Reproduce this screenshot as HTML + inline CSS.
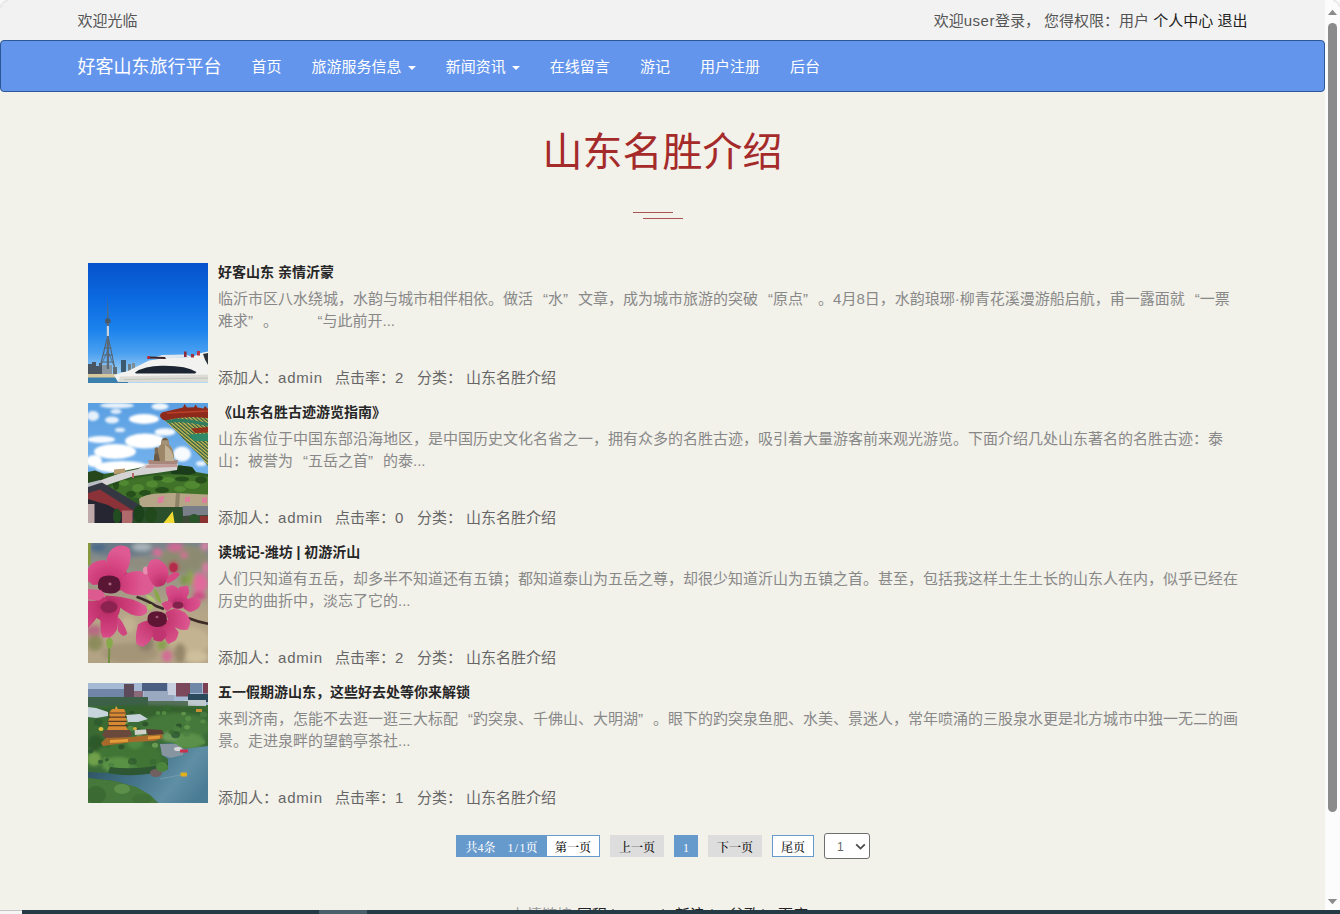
<!DOCTYPE html>
<html lang="zh-CN">
<head>
<meta charset="utf-8">
<title>山东名胜介绍 - 好客山东旅行平台</title>
<style>
*{box-sizing:border-box;}
html,body{margin:0;padding:0;}
html{overflow:hidden;}
body{width:1340px;height:914px;position:relative;overflow:hidden;background:#f2f1ea;
  font-family:"Liberation Sans","Noto Sans CJK SC",sans-serif;font-size:15px;color:#555;}
a{text-decoration:none;color:inherit;}
#view{position:absolute;left:0;top:0;width:1325px;height:910px;overflow:hidden;background:#f2f1ea;}
.container{width:1200px;margin:0 auto;padding:0 15px;position:relative;}
/* top bar */
#topbar{height:40px;overflow:hidden;background:#f2f2f2;line-height:42px;font-size:15px;color:#555;}
#topbar .l{float:left;}
#topbar .r{float:right;}
#topbar .r a{color:#222;}
/* navbar */
#nav{height:52px;background:#6495ed;border:1px solid #2c5996;border-radius:4px;}
#nav .brand{float:left;margin-left:-15px;padding:16px 15px 14px;font-size:18px;line-height:20px;color:#fff;height:50px;}
#nav ul{list-style:none;margin:0;padding:0;float:left;}
#nav li{float:left;}
#nav li a{display:block;padding:16px 15px 14px;line-height:20px;font-size:15px;color:#fff;height:50px;white-space:nowrap;}
.caret{display:inline-block;width:0;height:0;margin-left:2px;vertical-align:middle;border-top:4px solid #fff;border-right:4px solid transparent;border-left:4px solid transparent;}
/* title */
#title{position:absolute;left:0;top:122px;width:1325px;text-align:center;font-size:40px;line-height:60px;color:#a52a2a;font-weight:400;margin:0;}
.deco{position:absolute;height:1px;background:#ab5555;width:40px;}
/* list */
.item{position:absolute;left:88px;width:1150px;height:120px;}
.item .pic{position:absolute;left:0;top:0;width:120px;height:120px;overflow:hidden;display:block;}
.item .pic svg{display:block;}
.item h4{position:absolute;left:130px;top:1px;margin:0;font-size:14px;line-height:17px;font-weight:bold;color:#262626;white-space:nowrap;}
.item .desc{position:absolute;left:130px;top:25px;margin:0;font-size:15px;line-height:22px;color:#888;white-space:nowrap;}
.item .meta{position:absolute;left:130px;top:104px;margin:0;font-size:15px;line-height:22px;color:#666;white-space:nowrap;}
.q{display:inline-block;width:15px;}
.ql{text-align:right;}
.qr{text-align:left;}
.en{display:inline-block;}
/* pager */
#pager{position:absolute;left:0;top:835px;height:22px;width:1325px;font-family:"Liberation Serif","Noto Serif CJK SC",serif;font-size:12px;line-height:26px;color:#111;font-weight:500;}
#pager span,#pager a{position:absolute;top:0;height:22px;text-align:center;white-space:nowrap;overflow:hidden;}
.pb{background:#6699cc;color:#fff;}
#pager i{display:inline-block;width:6px;text-align:center;font-style:normal;}
.pw{background:#fff;border:1px solid #6699cc;line-height:24px;}
.pg{background:#ddd;}
#sel{position:absolute;left:824px;top:833px;width:46px;height:26px;background:#fff;border:1px solid #6e6e6e;border-radius:3px;font-size:12px;line-height:26px;color:#666;}
/* footer */
#foot{position:absolute;left:0;top:904px;width:1325px;height:22px;font-size:15px;line-height:22px;color:#999;white-space:nowrap;}
#foot a,#foot span{position:absolute;top:0;}
#foot a{color:#222;}
/* fake scrollbar */
#sb{position:absolute;left:1325px;top:0;width:15px;height:910px;background:#fcfcfc;}
#sb .thumb{position:absolute;left:3px;top:23px;width:9px;height:789px;border-radius:5px;background:#8b8b8b;}
#sb .up{position:absolute;left:3px;top:10px;width:0;height:0;border-left:4.5px solid transparent;border-right:4.5px solid transparent;border-bottom:5px solid #8b8b8b;}
#sb .dn{position:absolute;left:3px;top:899px;width:0;height:0;border-left:4.5px solid transparent;border-right:4.5px solid transparent;border-top:5px solid #8b8b8b;}
#strip{position:absolute;left:0;top:910px;width:1340px;height:4px;background:#f5f5f5;border-top:1px solid #c4c4c4;}
#strip i{position:absolute;left:22px;top:-1px;width:1318px;height:4px;background:#243a45;}
#strip b{position:absolute;left:319px;top:-1px;width:48px;height:4px;background:#4a5f6a;}
</style>
</head>
<body>
<div id="view">
  <div id="topbar"><div class="container"><div class="l">欢迎光临</div><div class="r">欢迎<span style="letter-spacing:0.5px">user</span>登录， 您得权限：用户 <a>个人中心</a> <a>退出</a></div></div></div>
  <div id="nav"><div class="container">
    <a class="brand">好客山东旅行平台</a>
    <ul>
      <li><a>首页</a></li>
      <li><a>旅游服务信息 <b class="caret"></b></a></li>
      <li><a>新闻资讯 <b class="caret"></b></a></li>
      <li><a>在线留言</a></li>
      <li><a>游记</a></li>
      <li><a>用户注册</a></li>
      <li><a>后台</a></li>
    </ul>
  </div></div>

  <h2 id="title">山东名胜介绍</h2>
  <div class="deco" style="left:633px;top:212px;"></div>
  <div class="deco" style="left:643px;top:218px;"></div>

  <div class="item" style="top:263px;">
    <a class="pic"><!--IMG1--><svg width="120" height="120" viewBox="0 0 120 120">
<defs>
<linearGradient id="a1" x1="0" y1="0" x2="0" y2="1"><stop offset="0" stop-color="#0652cc"/><stop offset=".3" stop-color="#0c6ae0"/><stop offset=".55" stop-color="#1a82ec"/><stop offset=".75" stop-color="#4aa0f0"/><stop offset=".88" stop-color="#8cc4f2"/><stop offset=".95" stop-color="#b4d8f4"/></linearGradient>
<filter id="b1"><feGaussianBlur stdDeviation=".5"/></filter>
</defs>
<rect width="120" height="120" fill="url(#a1)"/>
<g filter="url(#b1)">
<rect x="0" y="111" width="30" height="4" fill="#d8c79c"/>
<rect x="0" y="114.5" width="40" height="5.5" fill="#3a80ac"/>
<path d="M0 101h4v-2h4v4h3v-3h3v11H0z" fill="#4a5560"/>
<rect x="14" y="102" width="10" height="9" fill="#8a96a0"/>
<rect x="33" y="97" width="5" height="12" fill="#3b5a70"/>
<rect x="25" y="104" width="4" height="7" fill="#5d6d78"/>
<rect x="40" y="101" width="3" height="8" fill="#6d7d88"/>
<rect x="44" y="100" width="3" height="8" fill="#7d8d98"/>
<path d="M19.8 33 L20.6 55 L19 55 Z" fill="#5a6a7a"/>
<circle cx="19.8" cy="58" r="2.8" fill="#4a5866"/>
<rect x="18.8" y="60" width="2.2" height="46" fill="#5c6a78"/><rect x="18.8" y="63" width="2.2" height="10" fill="#c8d4e0"/>
<path d="M19 76 L12 104 M20.6 76 L26.5 104 M14.5 92 L25 92 M13 99 L26 99 M16 85 L23.5 85" stroke="#566472" stroke-width="1.1" fill="none"/>
<path d="M12 104 L19.8 88 L26.5 104" stroke="#566472" stroke-width=".8" fill="none"/>
</g>
<g filter="url(#b1)">
<path d="M26 112 L40 108 L61 97.5 L78 95 L104 94 L113 90 L120 88.5 L120 119 L30 119 Z" fill="#f2f2f0"/>
<path d="M62 96 L74 92 L98 91.5 L104 94 L78 95.5 Z" fill="#dfe6ee"/>
<path d="M59 95.5 L61 93.5 L77 94 L78 96 Z" fill="#3a2226"/>
<circle cx="60.5" cy="94.5" r="1.4" fill="#d02030"/>
<path d="M47 109.5 Q57 102.5 75 102.8 Q98 102.5 108.5 109 L107 110.5 L48 110.5 Z" fill="#1c2530"/>
<path d="M32 113.5 L120 111.5 L120 119 L30 119 Z" fill="#dcdcd6"/>
<path d="M36 116.5 L120 115" stroke="#b8b8b0" stroke-width=".7"/>
<rect x="96" y="88.5" width="2.6" height="5.5" fill="#8a2a3a"/>
<rect x="103" y="91" width="3" height="3.5" fill="#a03040"/>
<rect x="109" y="88" width="3" height="4.5" fill="#c03545"/>
<path d="M115 91 Q117 98 120 102 L120 90 Z" fill="#2a3038"/>
</g>
</svg><!--/IMG1--></a>
    <h4>好客山东 亲情沂蒙</h4>
    <p class="desc">临沂市区八水绕城，水韵与城市相伴相依。做活<span class="q ql">“</span>水<span class="q qr">”</span>文章，成为城市旅游的突破<span class="q ql">“</span>原点<span class="q qr">”</span>。4月8日，水韵琅琊·柳青花溪漫游船启航，甫一露面就<span class="q ql">“</span>一票<br>难求<span class="q qr">”</span>。　　<span class="en" style="width:7px"></span><span class="q ql">“</span>与此前开...</p>
    <p class="meta">添加人：<span class="en" style="width:45px;letter-spacing:0.8px">admin</span><span class="en" style="width:12px"></span>点击率：<span class="en" style="width:9px">2</span><span class="en" style="width:13px"></span>分类：<span class="en" style="width:4px"></span>山东名胜介绍</p>
  </div>

  <div class="item" style="top:403px;">
    <a class="pic"><!--IMG2--><svg width="120" height="120" viewBox="0 0 120 120">
<defs>
<linearGradient id="a2" x1="0" y1="0" x2="0" y2="1"><stop offset="0" stop-color="#5a9fe2"/><stop offset=".55" stop-color="#74b2ec"/></linearGradient>
<filter id="b2"><feGaussianBlur stdDeviation="1.3"/></filter>
<filter id="c2"><feGaussianBlur stdDeviation=".55"/></filter>
<pattern id="p2" width="2.6" height="2.6" patternUnits="userSpaceOnUse" patternTransform="rotate(40)"><rect width="2.6" height="2.6" fill="#2e5a40"/><rect width="2.6" height="1.3" fill="#cdbf58"/></pattern>
</defs>
<rect width="120" height="120" fill="url(#a2)"/>
<g filter="url(#b2)" fill="#fff">
<ellipse cx="29" cy="2.5" rx="17" ry="2.8" opacity=".85"/>
<ellipse cx="5" cy="13" rx="6" ry="5" opacity=".85"/>
<ellipse cx="24" cy="17" rx="7" ry="3.5" opacity=".85"/>
<ellipse cx="28" cy="8.5" rx="5.5" ry="2.5" opacity=".8"/>
<ellipse cx="56" cy="16" rx="15" ry="5"/>
<ellipse cx="72" cy="3.5" rx="8.5" ry="3.5" opacity=".9"/>
<ellipse cx="32" cy="27" rx="5" ry="2.2" opacity=".8"/>
<ellipse cx="77" cy="29" rx="10.5" ry="3.8" opacity=".95"/>
<ellipse cx="57" cy="38" rx="20" ry="7.5"/>
<ellipse cx="13" cy="36.5" rx="14" ry="3.6" opacity=".95"/>
<ellipse cx="27" cy="48.5" rx="21" ry="7.5"/>
<ellipse cx="6" cy="58" rx="8" ry="6"/>
<ellipse cx="94" cy="51" rx="9" ry="7.5" opacity=".95"/>
<ellipse cx="34" cy="64" rx="27" ry="6"/>
<ellipse cx="113" cy="60.5" rx="5" ry="2.6" opacity=".85"/>
</g>
<g filter="url(#c2)">
<!-- hill / trees -->
<path d="M0 70 L6 68 L15 71 L30 69 L50 65 L60 62 L81 63 L92 62.5 L104 64 L108 69 L120 71 L120 120 L0 120 Z" fill="#2f5c24"/>
<path d="M81 63.5 L92 62.5 L104 64 L108 70 L96 73 L84 72 Z" fill="#1c3c1c"/>
<path d="M0 69 L7 67.5 L16 71 L14 79 L0 80 Z" fill="#27471f"/>
<path d="M22 84 Q40 75 60 73 Q80 70 100 72 L120 74 L120 92 L50 95 L30 92 Z" fill="#3f7229"/>
<g fill="#548c30" filter="url(#c2)" opacity=".85"><ellipse cx="50" cy="85" rx="6" ry="4"/><ellipse cx="64" cy="81" rx="6" ry="3.5"/><ellipse cx="80" cy="77" rx="7" ry="3"/><ellipse cx="104" cy="82" rx="8" ry="4"/><ellipse cx="36" cy="80" rx="5" ry="3"/><ellipse cx="92" cy="86" rx="6" ry="3"/></g>
<g fill="#20481c" filter="url(#c2)" opacity=".85"><ellipse cx="57" cy="90" rx="6" ry="3"/><ellipse cx="74" cy="87" rx="7" ry="3"/><ellipse cx="94" cy="76" rx="7" ry="2.6"/><ellipse cx="113" cy="77" rx="6" ry="3.5"/><ellipse cx="43" cy="91" rx="5" ry="3"/><ellipse cx="28" cy="82" rx="3" ry="5"/><ellipse cx="70" cy="75" rx="5" ry="2.5"/></g>
<!-- terraces and stairs -->
<path d="M50 66 L59 60.5 L90 60.5 L89 67 L72 69.5 L46 73 L22 81 L0 89 L0 82 L20 74.5 L36 69 Z" fill="#d6d3d4"/>
<path d="M0 80 L12 77 L13 81 L0 86 Z" fill="#b8bcc4"/>
<path d="M59 62 L89 61.5 L89 64 L57 65 Z" fill="#c49a98"/>
<path d="M60 57 L90 57 L89 61.5 L61 61.5 Z" fill="#a8867c"/>
<path d="M26 66.5 L37 65.5 L37 69.5 L26 71.5 Z" fill="#b89a70"/>
<rect x="44" y="70" width="2" height="5" fill="#b86a6a"/>
<!-- buddha -->
<path d="M66 58 Q65.5 49 70 45.5 Q71.5 42 73 41.5 Q72.5 36 77 34.5 Q81.5 35.5 81 41.5 Q86 45 86.3 58 Z" fill="#9c8868"/>
<path d="M77 42 Q84 45 86.3 58 L77 58 Z" fill="#c2b296"/>
<path d="M66 58 Q65.5 50 69.5 46.5 L72 58 Z" fill="#6a5a44"/>
<path d="M66.5 46 Q68 43 70 45 L69.5 51 L67 51 Z" fill="#7a6a52"/>
<circle cx="77" cy="38.5" r="3.4" fill="#a3937a"/>
<path d="M73.6 37.2 Q77 32.6 80.4 37.2 Z" fill="#6b5b48"/>
<!-- eave -->
<path d="M75 16 L120 12 L120 63 L112 53 L100 41 L88 28 Z" fill="url(#p2)"/>
<path d="M72 12.5 Q72.5 9 78 8.5 L95 4.5 L96.5 1 L99 4.6 L106 4.2 L107.5 1.5 L109.5 4.6 L115.5 5.5 L117 3 L120 6 L120 15 L104 14 L90 15 L77 17.5 Q72.5 16 72 12.5 Z" fill="#8e2b1b"/>
<path d="M79 10 L120 8" stroke="#b8402a" stroke-width="1.6"/>
<path d="M77 17.5 L90 15.5 L104 17 L120 20 L120 23 L103 20 L90 19 L80 20 Z" fill="#2d7d62"/>
<path d="M103 25.5 L120 24 L120 29.5 L107 30 Z" fill="#94301e"/>
<path d="M100 31.5 L120 30.5 L120 38 L106 38 Z" fill="#2f8a68"/>
<!-- rock -->
<path d="M51 96 Q58 89.5 86 90 L120 91.5 L120 104 L52 104 Z" fill="#b4a686"/>
<path d="M88 90 L92 90 L91 104 L87 104 Z" fill="#8c8266"/>
<path d="M70 94.5 l6 -2 l-1 7 l-5.5 1 Z M97 94.5 l5 -1 l0 5 l-5 1 Z M114 95 l5 -1 l0 6 l-5 0 Z" fill="#dd7f9c"/>
<!-- roofs bottom-left -->
<path d="M0 84 L14 79.5 L30 89 L50 101 L73 117 L73 120 L0 120 Z" fill="#343842"/>
<path d="M0 90 L12 86.5 L30 98 L46 108 L40 112 L0 100 Z" fill="#8a3239"/>
<path d="M0 96 L20 102 L34 110 L34 120 L0 120 Z" fill="#282830"/>
<rect x="0" y="101" width="6.5" height="19" fill="#bda9a9"/>
<rect x="34" y="107.5" width="10.5" height="12.5" fill="#b06a6c"/>
<path d="M52 104 L95 104 L95 120 L44 120 Z" fill="#29502a"/>
<path d="M94.500 103 L120 103 L120 112 L95 113 Z" fill="#797e88"/>
<path d="M95 113 L120 112 L120 120 L95 120 Z" fill="#3a4a35"/>
<rect x="112" y="113" width="8" height="7" fill="#8a3232"/>
<path d="M75.500 120 L84.700 108.300 L86.600 120 Z" fill="#f0da32"/>
<ellipse cx="29" cy="113" rx="4" ry="7.500" fill="#244d24"/>
<ellipse cx="51" cy="111" rx="5.500" ry="9" fill="#1f431d"/>
<ellipse cx="63" cy="112" rx="6" ry="8" fill="#23491f"/>
<ellipse cx="106" cy="116" rx="5" ry="5" fill="#2a552a"/>
</g>
</svg><!--/IMG2--></a>
    <h4>《山东名胜古迹游览指南》</h4>
    <p class="desc">山东省位于中国东部沿海地区，是中国历史文化名省之一，拥有众多的名胜古迹，吸引着大量游客前来观光游览。下面介绍几处山东著名的名胜古迹：泰<br>山：被誉为<span class="q ql">“</span>五岳之首<span class="q qr">”</span>的泰...</p>
    <p class="meta">添加人：<span class="en" style="width:45px;letter-spacing:0.8px">admin</span><span class="en" style="width:12px"></span>点击率：<span class="en" style="width:9px">0</span><span class="en" style="width:13px"></span>分类：<span class="en" style="width:4px"></span>山东名胜介绍</p>
  </div>

  <div class="item" style="top:543px;">
    <a class="pic"><!--IMG3--><svg width="120" height="120" viewBox="0 0 120 120">
<defs>
<linearGradient id="a3" x1="0" y1="0" x2="0" y2="1"><stop offset="0" stop-color="#77848c"/><stop offset=".18" stop-color="#8d8f86"/><stop offset=".42" stop-color="#a59c86"/><stop offset=".6" stop-color="#b6a688"/><stop offset="1" stop-color="#b3a385"/></linearGradient>
<filter id="b3"><feGaussianBlur stdDeviation="2"/></filter>
<filter id="c3"><feGaussianBlur stdDeviation=".7"/></filter>
<radialGradient id="f1" gradientUnits="userSpaceOnUse" cx="21" cy="42" r="34"><stop offset="0" stop-color="#a82460"/><stop offset=".3" stop-color="#c93874"/><stop offset=".7" stop-color="#d94a86"/><stop offset="1" stop-color="#dd5a92"/></radialGradient>
<radialGradient id="f2" gradientUnits="userSpaceOnUse" cx="20" cy="63" r="36"><stop offset="0" stop-color="#9c2058"/><stop offset=".3" stop-color="#c2336e"/><stop offset=".75" stop-color="#d24480"/><stop offset="1" stop-color="#dc5a92"/></radialGradient>
<radialGradient id="f3" gradientUnits="userSpaceOnUse" cx="74" cy="42" r="28"><stop offset="0" stop-color="#b82c66"/><stop offset=".5" stop-color="#d74884"/><stop offset="1" stop-color="#de5c94"/></radialGradient>
<radialGradient id="f4" gradientUnits="userSpaceOnUse" cx="90" cy="62" r="24"><stop offset="0" stop-color="#a82460"/><stop offset=".4" stop-color="#d04080"/><stop offset="1" stop-color="#dc5890"/></radialGradient>
<radialGradient id="f5" gradientUnits="userSpaceOnUse" cx="69" cy="76" r="32"><stop offset="0" stop-color="#9c2058"/><stop offset=".35" stop-color="#c63872"/><stop offset="1" stop-color="#dc5690"/></radialGradient>
</defs>
<rect width="120" height="120" fill="url(#a3)"/>
<g filter="url(#b3)">
<ellipse cx="34" cy="6" rx="32" ry="8" fill="#697a88"/>
<ellipse cx="10" cy="4" rx="8" ry="4" fill="#4a6a88"/>
<ellipse cx="54" cy="4" rx="10" ry="4" fill="#aab4ba"/>
<ellipse cx="96" cy="16" rx="24" ry="14" fill="#8c8b72"/>
<ellipse cx="50" cy="20" rx="10" ry="6" fill="#8f8d80"/>
<ellipse cx="69.500" cy="9.500" rx="4.500" ry="4" fill="#dc6a9a"/>
<ellipse cx="87" cy="4" rx="8" ry="4.500" fill="#cf6894"/>
<ellipse cx="117" cy="3" rx="4" ry="4" fill="#e080a8"/>
<ellipse cx="96" cy="12" rx="3.500" ry="3" fill="#d86a98"/>
<ellipse cx="85.500" cy="24" rx="5" ry="5.500" fill="#b82a50"/>
<ellipse cx="112" cy="40" rx="8" ry="10" fill="#e06a9c"/>
<ellipse cx="111" cy="53" rx="7" ry="4" fill="#cf4a84"/>
<ellipse cx="118" cy="25" rx="3" ry="6" fill="#e078a4"/>
<ellipse cx="102.500" cy="35" rx="3" ry="8" fill="#88a648"/>
<ellipse cx="96" cy="37" rx="3" ry="5" fill="#7a9440"/>
<ellipse cx="6" cy="88" rx="8" ry="6" fill="#b86a84"/>
<ellipse cx="7" cy="100" rx="8" ry="8" fill="#8c8c5c"/>
<ellipse cx="79" cy="113" rx="5" ry="6" fill="#d46a96"/>
<ellipse cx="74" cy="102" rx="5" ry="5.500" fill="#86a04c"/>
<ellipse cx="102" cy="98" rx="20" ry="14" fill="#c4b390"/>
<ellipse cx="108" cy="114" rx="12" ry="6" fill="#cfc09c"/>
<ellipse cx="42" cy="110" rx="28" ry="10" fill="#a49478"/>
<ellipse cx="58" cy="100" rx="8" ry="8" fill="#8d806a"/>
<ellipse cx="92" cy="110" rx="6" ry="10" fill="#95866a"/>
<ellipse cx="40" cy="82" rx="8" ry="8" fill="#c2b292"/>
</g>
<g filter="url(#c3)">
<rect x="0" y="0" width="2.600" height="22" fill="#86983a"/>
<path d="M48.600 53.800 Q60 58 68 63 L76 66 M100 75 Q110 79 120 80.700" stroke="#3a2b28" stroke-width="2.600" fill="none"/>
<path d="M21.500 96 L21 120" stroke="#6f8e40" stroke-width="2"/>
<ellipse cx="21.500" cy="100" rx="3.300" ry="5.500" fill="#86aa4a"/>
<path d="M65.600 46 Q71 47 73.500 60.400 Q67 58 65.600 46 Z" fill="#8aa848"/>
<path d="M57.800 52 Q64 51 68 59 Q61 59.500 57.800 52 Z" fill="#b4c474"/>
<ellipse cx="62" cy="64" rx="3" ry="3" fill="#a8bc64"/>
<!-- flower 1 -->
<ellipse cx="28" cy="37" rx="15" ry="11" fill="#c93874"/>
<path d="M18.400 17 Q20 9 25 5.300 Q29 2 34 2.600 Q40 3 42 6.600 Q43.500 12 42 18.400 Q41 24 38 29 L33 35.400 L23.600 32.800 Q19 27 18.400 23.600 Z" fill="url(#f1)"/>
<path d="M0 26 Q2 21.500 5 19.700 Q11 16.500 17 17 Q22 24 23.600 32.800 Q20 37 15.800 39.400 Q10 42 5 42 L0 38 Z" fill="url(#f1)"/>
<path d="M32.800 36.800 Q35 32.500 39.400 30.200 Q46 27.500 52.500 28.200 Q59 30 63 34 Q66.500 38.500 66.300 43.300 Q65 48 61.700 50 Q56 52.500 50 52.500 Q43 52 38 50.500 Q33.500 48 31.500 44.600 Z" fill="url(#f1)"/>
<path d="M10 40 Q11 34 17 33 Q24 31.500 30 35 Q33.500 39 32 46 Q29 51 22 50.500 Q13 50 10 45 Z" fill="#5a1434"/>
<ellipse cx="22" cy="41" rx="1.600" ry="1.400" fill="#a86a7c"/>
<!-- flower 2 -->
<ellipse cx="18" cy="66" rx="14" ry="12" fill="#c2336e"/>
<path d="M0 46 L13 47 Q16 49.500 17 52.500 Q14 56 10.500 57.800 L0 56.500 Z" fill="#dc5a90"/>
<path d="M17 52.500 Q25 52.500 33 54 Q39 55 44.600 56.500 Q52 59 57.800 63 Q60 66.500 59 69.600 Q56.500 72.500 52.500 73 Q48 73 43.300 71.500 Q37 68.500 31.500 64.300 Q25 61.500 19.700 59 Z" fill="url(#f2)"/>
<path d="M0 57.800 L10.500 57.800 Q13 61 13 65.600 Q11.500 71 7.900 76 Q4 81 0 85 Z" fill="url(#f2)"/>
<path d="M13 68 Q19 65 26 65.600 Q29.500 69 30 73.500 Q30.500 80 29 86.600 Q26.500 91.500 22.300 94.500 L14.400 94.500 Q12.500 89 12.500 84 Q12 76 13 68 Z" fill="url(#f2)"/>
<path d="M29 73.500 Q32 75.500 34 78.800 Q37.500 84.500 39.400 90.600 Q38 92.500 35.400 93 Q32 91 30 88 Z" fill="#cf4580"/>
<ellipse cx="21" cy="64" rx="8.500" ry="6" fill="#8c2250"/>
<!-- flower 3 -->
<ellipse cx="57.700" cy="27.500" rx="2.800" ry="4" fill="#e88cb0"/>
<ellipse cx="85.500" cy="24.500" rx="4" ry="4.500" fill="#b42a4c"/>
<path d="M59 26 Q60 20 63 17 Q67 15.500 71 16.400 Q76 19 78.800 23.600 Q81 28 80.700 32.800 Q79.500 38 76 42 Q72 44 68 44 Q64 41 61.700 36.800 Q59.500 32 59 26 Z" fill="url(#f3)"/>
<path d="M78.800 35.400 Q82 31 86.600 29 Q90 29 92 31 Q90 34.500 86.600 36.800 Q83 39.500 78.800 40.700 Z" fill="#d84a84"/>
<!-- flower 4 -->
<ellipse cx="90" cy="58" rx="10" ry="8" fill="#cc3c7a"/>
<path d="M77.500 44.600 Q80.500 42.500 84 42 Q88 43 90.600 46 Q91.500 50 90.600 55 Q89 58.500 86.600 60.400 Q82.500 58.500 80 55 Q77.500 50 77.500 44.600 Z" fill="url(#f4)"/>
<path d="M90.600 44.600 Q95 42.500 99.800 42.700 Q101.500 46 101 50 Q99 55 95.800 59 L90.600 57.800 Z" fill="url(#f4)"/>
<path d="M97 57.800 Q102 54.500 107.600 53.800 Q111.500 55.500 113 59 Q112.500 63 110 65.600 Q106.500 68 102.400 69 Q98.500 68 95.800 65.600 Z" fill="url(#f4)"/>
<path d="M73.500 60.400 Q77 58 81.400 57.800 Q84 60 85.300 63 Q82.500 66 78.800 68.300 Q75 65 73.500 60.400 Z" fill="#d44882"/>
<ellipse cx="90" cy="62" rx="5.500" ry="3.600" fill="#80204a"/>
<!-- flower 5 -->
<ellipse cx="71" cy="85" rx="16" ry="10" fill="#c63872"/>
<path d="M77.500 69.600 Q81.500 66.500 86.600 65.600 Q92 66.500 97 69.600 Q100.500 73 102.400 77.500 Q102 82.500 99.800 86.600 Q96 87.500 92 86.600 Q86 84 81.400 80 Z" fill="url(#f5)"/>
<path d="M50 81.400 Q54 78.500 59 77.500 Q63 81 65.600 85.300 Q65.500 91.500 63 97 Q59.500 101.500 55 103.700 Q51 103 48.600 101 Q47.500 96.500 48 92 Q48.500 86.500 50 81.400 Z" fill="url(#f5)"/>
<path d="M73.500 81.400 L84 81.400 Q88 85 90.600 89.300 Q90 93.500 88 97 Q84.500 99.500 80 101 Q77 96.500 76 92 Z" fill="url(#f5)"/>
<path d="M64.300 85.300 Q69 84 73.500 84 Q77 87.500 78.800 92 Q77 96 73.500 98.500 Q69 98.500 65.600 97 Z" fill="#c03470"/>
<path d="M59.500 75 Q60 69.500 66 68.500 Q73 67.500 77.500 71 Q80 75 78 80.500 Q74 84.500 68 84 Q61 83 59.500 78 Z" fill="#5e1636"/>
<ellipse cx="69" cy="74" rx="1.500" ry="1.200" fill="#a05a74"/>
</g>
</svg><!--/IMG3--></a>
    <h4>读城记-潍坊 | 初游沂山</h4>
    <p class="desc">人们只知道有五岳，却多半不知道还有五镇；都知道泰山为五岳之尊，却很少知道沂山为五镇之首。甚至，包括我这样土生土长的山东人在内，似乎已经在<br>历史的曲折中，淡忘了它的...</p>
    <p class="meta">添加人：<span class="en" style="width:45px;letter-spacing:0.8px">admin</span><span class="en" style="width:12px"></span>点击率：<span class="en" style="width:9px">2</span><span class="en" style="width:13px"></span>分类：<span class="en" style="width:4px"></span>山东名胜介绍</p>
  </div>

  <div class="item" style="top:683px;">
    <a class="pic"><!--IMG4--><svg width="120" height="120" viewBox="0 0 120 120">
<defs>
<filter id="b4"><feGaussianBlur stdDeviation="1.5"/></filter>
<filter id="c4"><feGaussianBlur stdDeviation=".6"/></filter>
<linearGradient id="l4" x1="0" y1=".3" x2="1" y2=".7"><stop offset="0" stop-color="#2b5160"/><stop offset=".45" stop-color="#447489"/><stop offset=".75" stop-color="#5f8fa5"/><stop offset="1" stop-color="#4b7c96"/></linearGradient>
</defs>
<rect width="120" height="120" fill="#3b6c38"/>
<g filter="url(#c4)">
<rect x="0" y="0" width="120" height="22" fill="#a6b9d4"/>
<rect x="0" y="6" width="36" height="10" fill="#6f86a8"/>
<rect x="36" y="1" width="10" height="16" fill="#5c4a5a"/>
<rect x="46" y="8" width="9" height="12" fill="#8a6a78"/>
<rect x="54" y="0" width="25" height="8" fill="#4c5e82"/>
<rect x="56" y="8" width="30" height="10" fill="#9aa8c0"/>
<rect x="80" y="0" width="8" height="12" fill="#c8d0e0"/>
<rect x="88" y="0" width="14" height="13.5" fill="#7c4a5c"/>
<rect x="102" y="0" width="12" height="10" fill="#6f88a8"/>
<rect x="115" y="0" width="5" height="10.5" fill="#7c4052"/>
<rect x="100" y="11" width="20" height="8" fill="#2a4a5a"/>
<rect x="96" y="17" width="22" height="6" fill="#c0c8d0"/>
<rect x="0" y="14" width="60" height="9" fill="#3d6048"/>
<rect x="60" y="18" width="40" height="6" fill="#55705a"/>
</g>
<g filter="url(#b4)">
<ellipse cx="60" cy="28" rx="62" ry="6" fill="#35622f"/>
<ellipse cx="88" cy="44" rx="34" ry="14" fill="#44783a"/>
<ellipse cx="100" cy="58" rx="16" ry="8" fill="#5a9048"/>
<ellipse cx="82" cy="54" rx="8" ry="5" fill="#6a9a58"/>
<ellipse cx="12" cy="46" rx="14" ry="10" fill="#3a6a32"/>
<ellipse cx="8" cy="60" rx="8" ry="8" fill="#2f5a2a"/>
<ellipse cx="40" cy="74" rx="34" ry="16" fill="#3f7436"/>
<ellipse cx="47" cy="60" rx="8" ry="6" fill="#4f8840"/>
<ellipse cx="30" cy="82" rx="16" ry="8" fill="#5a9245"/>
<ellipse cx="6" cy="76" rx="7" ry="7" fill="#6fa04a"/>
</g>
<g filter="url(#c4)"><ellipse cx="38.9" cy="38.5" rx="2.4" ry="1.9" fill="#2a5230" opacity=".75"/><ellipse cx="43.9" cy="29.6" rx="2.3" ry="1.8" fill="#27492a" opacity=".75"/><ellipse cx="50.2" cy="47.1" rx="2.3" ry="1.9" fill="#2a5230" opacity=".75"/><ellipse cx="70.0" cy="29.9" rx="2.3" ry="1.9" fill="#5c9448" opacity=".75"/><ellipse cx="5.6" cy="106.4" rx="2.9" ry="2.3" fill="#356a30" opacity=".75"/><ellipse cx="64.9" cy="78.8" rx="3.5" ry="2.8" fill="#356a30" opacity=".75"/><ellipse cx="12.4" cy="78.8" rx="2.6" ry="2.1" fill="#2a5230" opacity=".75"/><ellipse cx="51.3" cy="54.2" rx="3.2" ry="2.6" fill="#6aa050" opacity=".75"/><ellipse cx="29.8" cy="41.3" rx="2.4" ry="1.9" fill="#6aa050" opacity=".75"/><ellipse cx="87.5" cy="51.6" rx="4.5" ry="3.6" fill="#2a5230" opacity=".75"/><ellipse cx="115.4" cy="31.5" rx="3.5" ry="2.8" fill="#4a8040" opacity=".75"/><ellipse cx="95.6" cy="30.6" rx="2.4" ry="1.9" fill="#6aa050" opacity=".75"/><ellipse cx="56.9" cy="87.8" rx="2.3" ry="1.9" fill="#6aa050" opacity=".75"/><ellipse cx="98.6" cy="51.3" rx="3.1" ry="2.5" fill="#4a8040" opacity=".75"/><ellipse cx="2.7" cy="68.3" rx="2.6" ry="2.1" fill="#2a5230" opacity=".75"/><ellipse cx="20.0" cy="62.6" rx="2.8" ry="2.3" fill="#356a30" opacity=".75"/><ellipse cx="33.4" cy="63.9" rx="3.0" ry="2.4" fill="#27492a" opacity=".75"/><ellipse cx="114.9" cy="38.5" rx="2.6" ry="2.1" fill="#5c9448" opacity=".75"/><ellipse cx="79.0" cy="25.2" rx="4.1" ry="3.3" fill="#356a30" opacity=".75"/><ellipse cx="44.3" cy="78.4" rx="4.4" ry="3.5" fill="#2c5a2c" opacity=".75"/><ellipse cx="67.1" cy="62.2" rx="3.1" ry="2.5" fill="#7aa85a" opacity=".75"/><ellipse cx="76.1" cy="30.0" rx="2.4" ry="1.9" fill="#5c9448" opacity=".75"/><ellipse cx="52.9" cy="34.6" rx="2.4" ry="1.9" fill="#356a30" opacity=".75"/><ellipse cx="45.1" cy="84.9" rx="4.4" ry="3.5" fill="#4a8040" opacity=".75"/><ellipse cx="37.4" cy="37.8" rx="3.9" ry="3.1" fill="#7aa85a" opacity=".75"/><ellipse cx="99.5" cy="39.5" rx="2.3" ry="1.8" fill="#4a8040" opacity=".75"/><ellipse cx="17.6" cy="76.1" rx="2.3" ry="1.8" fill="#6aa050" opacity=".75"/><ellipse cx="83.5" cy="49.1" rx="3.0" ry="2.4" fill="#356a30" opacity=".75"/><ellipse cx="42.7" cy="45.4" rx="3.4" ry="2.7" fill="#5c9448" opacity=".75"/><ellipse cx="91.0" cy="42.7" rx="2.8" ry="2.2" fill="#27492a" opacity=".75"/><ellipse cx="88.8" cy="45.8" rx="3.4" ry="2.7" fill="#4a8040" opacity=".75"/><ellipse cx="23.2" cy="82.1" rx="3.0" ry="2.4" fill="#4a8040" opacity=".75"/><ellipse cx="114.6" cy="59.0" rx="2.7" ry="2.2" fill="#5c9448" opacity=".75"/><ellipse cx="0.2" cy="111.3" rx="3.0" ry="2.4" fill="#2a5230" opacity=".75"/><ellipse cx="100.2" cy="35.5" rx="3.1" ry="2.5" fill="#5c9448" opacity=".75"/><ellipse cx="57.4" cy="41.1" rx="3.0" ry="2.4" fill="#27492a" opacity=".75"/><ellipse cx="10.2" cy="39.3" rx="4.5" ry="3.6" fill="#2c5a2c" opacity=".75"/><ellipse cx="18.1" cy="110.9" rx="4.1" ry="3.2" fill="#356a30" opacity=".75"/><ellipse cx="18.7" cy="76.6" rx="2.2" ry="1.8" fill="#2a5230" opacity=".75"/><ellipse cx="99.1" cy="44.3" rx="2.8" ry="2.2" fill="#6aa050" opacity=".75"/></g>
<g filter="url(#c4)">
<path d="M0 24 L8 25 L20 29 L20 33 L8 35 L0 34 Z" fill="#c9d5dd"/>
<path d="M38 32 L52 31 L60 36 L50 39 L40 39 Z" fill="#c5d2da"/>
<path d="M72 61 L84 60 L96 66 L120 63 L120 120 L70 120 L62 112 L48 104 L26 98 L0 95 L0 89 L20 90 L40 92 L62 90 L80 86 L80 76 L74 72 Z" fill="url(#l4)"/>
<path d="M72 61 L88 61 L96 66 L95 72 L82 75 L74 72 Z" fill="#8795a0"/>
<ellipse cx="90" cy="66" rx="4" ry="2" fill="#d8d8d8"/>
<rect x="92" y="66.5" width="8" height="3" fill="#c8304e"/>
<path d="M0 95 L26 98 L48 104 L62 112 L70 120 L0 120 Z" fill="#47783a"/>
<ellipse cx="8" cy="112" rx="10" ry="9" fill="#3b6a33"/>
<ellipse cx="34" cy="106" rx="8" ry="5" fill="#5c8f48"/>
<ellipse cx="54" cy="116" rx="10" ry="5" fill="#3f7036"/>
<path d="M20 90 Q50 96 80 86 L80 80 Q50 88 22 84 Z" fill="#2d5630"/>
<ellipse cx="68" cy="90" rx="6" ry="4" fill="#6f6060"/>
<ellipse cx="74" cy="84" rx="6" ry="5" fill="#4c843c"/>
<!-- pagoda -->
<path d="M24 26 L36 26 L38 30 L37 34 L39 38 L37 42 L40 47 L19 47 L21 42 L20 38 L22 34 L21 30 Z" fill="#d88a32"/>
<path d="M21 30 H38 M20 34.2 H39 M20 38.4 H39 M19.5 42.6 H40" stroke="#5a3a28" stroke-width="1.2"/>
<path d="M28 23 L30 26 L27 26 Z" fill="#e0a040"/>
<path d="M17 47 L42 47 L44 52 L36 56 L18 56 L14 52 Z" fill="#6b4a3e"/>
<path d="M18 55 L44 54 L60 52 L74 51 L75 55 L66 58 L44 59 L30 61 L15 63 L13 60 Z" fill="#a86a2c"/><path d="M22 57 L40 56 L40 59 L22 60 Z M60 53.5 L72 52.5 L72 55.5 L60 56.5 Z" fill="#e09a38"/>
<path d="M58 46 L74 47 L76 51 L60 52 Z" fill="#5e3a34"/>
<path d="M46.5 47 L58 46.5 L58.5 51 L47 52 Z" fill="#d0d0c8"/>
<ellipse cx="13" cy="46" rx="2.5" ry="2" fill="#e0c040"/>
<ellipse cx="47" cy="45.5" rx="2" ry="1.6" fill="#e0b040"/>
<rect x="108" y="26" width="6" height="3" fill="#c89030"/>
<rect x="92.5" y="89.5" width="6.5" height="4" rx="1" fill="#e2b01e"/>
<path d="M72 96 L92 92" stroke="#7aa0b0" stroke-width=".8"/>
</g>
</svg><!--/IMG4--></a>
    <h4>五一假期游山东，这些好去处等你来解锁</h4>
    <p class="desc">来到济南，怎能不去逛一逛三大标配<span class="q ql">“</span>趵突泉、千佛山、大明湖<span class="q qr">”</span>。眼下的趵突泉鱼肥、水美、景迷人，常年喷涌的三股泉水更是北方城市中独一无二的画<br>景。走进泉畔的望鹤亭茶社...</p>
    <p class="meta">添加人：<span class="en" style="width:45px;letter-spacing:0.8px">admin</span><span class="en" style="width:12px"></span>点击率：<span class="en" style="width:9px">1</span><span class="en" style="width:13px"></span>分类：<span class="en" style="width:4px"></span>山东名胜介绍</p>
  </div>

  <div id="pager">
    <span class="pb" style="left:456px;width:91px;">共<i>4</i>条<i></i><i></i><i>1</i><i>/</i><i>1</i>页</span>
    <a class="pw" style="left:546px;width:54px;">第一页</a>
    <a class="pg" style="left:610px;width:54px;">上一页</a>
    <span class="pb" style="left:674px;width:24px;">1</span>
    <a class="pg" style="left:708px;width:54px;">下一页</a>
    <a class="pw" style="left:772px;width:42px;">尾页</a>
  </div>
  <div id="sel"><span style="position:absolute;left:12px;top:0;">1</span><svg style="position:absolute;left:30px;top:9px" width="11" height="8" viewBox="0 0 11 8"><path d="M1.2 1.3 L5.5 5.6 L9.8 1.3" fill="none" stroke="#4a4a4a" stroke-width="1.8"/></svg></div>

  <div id="foot"><span style="left:512px">友情链接:</span><a style="left:577px">同程</a><span style="left:611px;color:#555">|</span><a style="left:632px">QQ</a><span style="left:661px;color:#555">|</span><a style="left:675px">新浪</a><span style="left:710px;color:#555">|</span><a style="left:729px">谷歌</a><span style="left:761px;color:#555">|</span><a style="left:778px">百度</a></div>
</div>
<div id="sb"><svg style="position:absolute;left:0;top:0" width="15" height="910" viewBox="0 0 15 910"><polygon points="2.9,15 12.1,15 7.5,9.8" fill="#8b8b8b"/><polygon points="2.9,899 12.1,899 7.5,904.2" fill="#8b8b8b"/><path d="M8 0.500 A 7 7 0 0 1 14.500 7" fill="none" stroke="#e6e6e6" stroke-width="1.500"/></svg><i class="thumb"></i></div>
<svg style="position:absolute;left:0;top:0" width="9" height="9" viewBox="0 0 9 9"><path d="M0 0 H8 A8 8 0 0 0 0 8 Z" fill="#f8f8f8"/><path d="M0.700 8 A 7.300 7.300 0 0 1 8 0.700" fill="none" stroke="#e7e7e7" stroke-width="1.400"/></svg>
<div id="strip"><i></i><b></b></div>
</body>
</html>
